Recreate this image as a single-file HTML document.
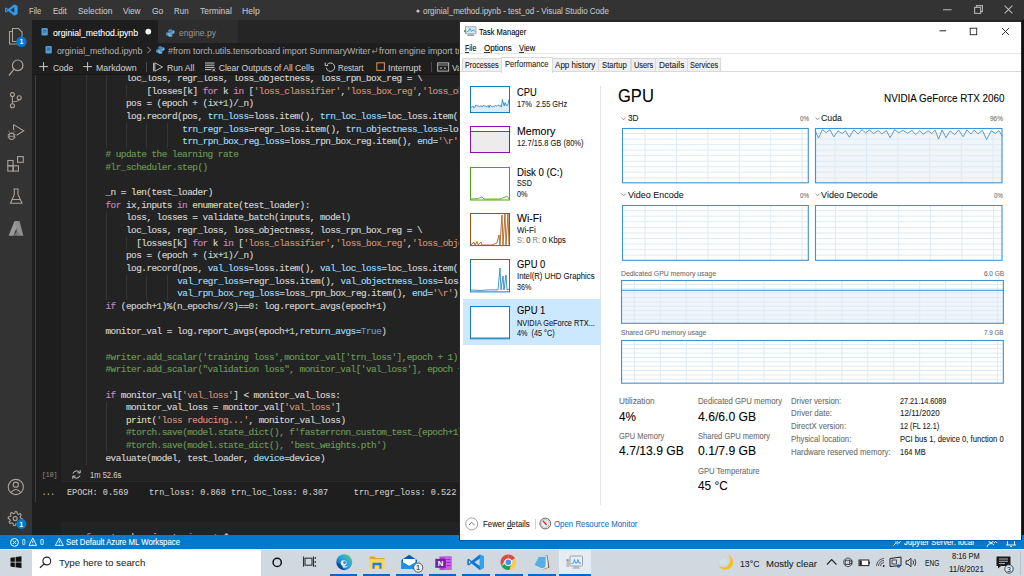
<!DOCTYPE html>
<html><head><meta charset="utf-8"><style>
*{margin:0;padding:0;box-sizing:border-box}
html,body{width:1024px;height:576px;overflow:hidden;background:#1e1e1e;font-family:"Liberation Sans",sans-serif}
.a{position:absolute}
.t{-webkit-text-stroke:0.08px currentColor;position:absolute;white-space:pre;transform-origin:0 0}
.ln{-webkit-text-stroke:0.15px currentColor;position:absolute;white-space:pre;font-family:"Liberation Mono",monospace;font-size:9.4px;letter-spacing:-0.52px;line-height:12.66px;height:12.66px;color:#d4d4d4}
.k{color:#c586c0}.f{color:#dcdcaa}.p{color:#9cdcfe}.s{color:#ce9178}.c{color:#6a9955}.n{color:#b5cea8}.b{color:#569cd6}
svg{position:absolute;overflow:visible}
</style></head><body>
<div class="a" style="left:0px;top:0px;width:1024px;height:20px;background:#333333"></div>
<div class="a" style="left:0px;top:20px;width:32px;height:515px;background:#333333"></div>
<div class="a" style="left:32px;top:20px;width:992px;height:23px;background:#252526"></div>
<div class="a" style="left:32px;top:20px;width:126px;height:23px;background:#1e1e1e"></div>
<div class="a" style="left:158px;top:20px;width:80px;height:23px;background:#2d2d2d"></div>
<div class="a" style="left:32px;top:43px;width:992px;height:492px;background:#1e1e1e"></div>
<svg style="left:5px;top:4px;" width="13" height="12" viewBox="0 0 13 12"><path d="M9.3 0.3 L12.6 1.9 V10.1 L9.3 11.7 L3.2 6.9 L1.2 8.6 L0 8 V4 L1.2 3.4 L3.2 5.1 Z M9.3 3.3 L5.3 6 L9.3 8.7 Z M1.3 4.6 V7.4 L2.6 6 Z" fill="#2f9bf0" fill-rule="evenodd"/></svg>
<div id="t1" class="t" style="left:28.70px;top:6.75px;font-size:8.8px;line-height:8.8px;color:#c3c3c3;transform:scaleX(0.8612);">File</div>
<div id="t2" class="t" style="left:52.60px;top:6.75px;font-size:8.8px;line-height:8.8px;color:#c3c3c3;transform:scaleX(0.8973);">Edit</div>
<div id="t3" class="t" style="left:77.70px;top:6.75px;font-size:8.8px;line-height:8.8px;color:#c3c3c3;transform:scaleX(0.9478);">Selection</div>
<div id="t4" class="t" style="left:122.90px;top:6.75px;font-size:8.8px;line-height:8.8px;color:#c3c3c3;transform:scaleX(0.9256);">View</div>
<div id="t5" class="t" style="left:151.80px;top:6.75px;font-size:8.8px;line-height:8.8px;color:#c3c3c3;transform:scaleX(0.9542);">Go</div>
<div id="t6" class="t" style="left:173.70px;top:6.75px;font-size:8.8px;line-height:8.8px;color:#c3c3c3;transform:scaleX(0.9049);">Run</div>
<div id="t7" class="t" style="left:199.50px;top:6.75px;font-size:8.8px;line-height:8.8px;color:#c3c3c3;transform:scaleX(0.9553);">Terminal</div>
<div id="t8" class="t" style="left:242.20px;top:6.75px;font-size:8.8px;line-height:8.8px;color:#c3c3c3;transform:scaleX(0.9780);">Help</div>
<svg style="left:416px;top:8.5px;" width="4" height="4" viewBox="0 0 4 4"><circle cx="2" cy="2" r="1.6" fill="#c3c3c3"/></svg>
<div id="t9" class="t" style="left:422.60px;top:6.75px;font-size:8.8px;line-height:8.8px;color:#c3c3c3;transform:scaleX(0.9059);">orginial_method.ipynb - test_od - Visual Studio Code</div>
<svg style="left:943px;top:9px;" width="9" height="2" viewBox="0 0 9 2"><rect x="0" y="0.2" width="8.5" height="1.1" fill="#b0b0b0"/></svg>
<svg style="left:974px;top:5px;" width="9" height="9" viewBox="0 0 9 9"><rect x="0.6" y="2.4" width="6" height="6" fill="none" stroke="#b0b0b0" stroke-width="1.1"/><path d="M2.4 2.4 V0.6 H8.4 V6.6 H6.6" fill="none" stroke="#b0b0b0" stroke-width="1.1"/></svg>
<svg style="left:1004px;top:5px;" width="9" height="9" viewBox="0 0 9 9"><path d="M0.6 0.6 L8.4 8.4 M8.4 0.6 L0.6 8.4" stroke="#b8b8b8" stroke-width="1.1"/></svg>
<svg style="left:0px;top:20px;" width="32" height="32" viewBox="0 0 32 32"><path d="M12.5 8.5 h6 l3.5 3.5 v9.5 h-9.5 z M12.5 11.5 h-3 v12.5 h9.5 v-2.5" fill="none" stroke="#a9a29b" stroke-width="1.1"/></svg>
<svg style="left:0px;top:20px;" width="32" height="32" viewBox="0 0 32 32"><circle cx="21.4" cy="21.7" r="5.2" fill="#0078d4"/><text x="21.4" y="24.3" font-size="7" font-family="Liberation Sans" fill="#fff" text-anchor="middle" font-weight="bold">1</text></svg>
<svg style="left:0px;top:52px;" width="32" height="30" viewBox="0 0 32 30"><circle cx="17.7" cy="13.3" r="5.3" fill="none" stroke="#a9a29b" stroke-width="1.2"/><path d="M14 17.2 L9 23.5" stroke="#a9a29b" stroke-width="1.3"/></svg>
<svg style="left:0px;top:85px;" width="32" height="30" viewBox="0 0 32 30"><circle cx="12.4" cy="9.6" r="2" fill="none" stroke="#a9a29b" stroke-width="1.1"/><circle cx="12.4" cy="20.8" r="2" fill="none" stroke="#a9a29b" stroke-width="1.1"/><circle cx="19.2" cy="12.7" r="2" fill="none" stroke="#a9a29b" stroke-width="1.1"/><path d="M12.4 11.6 V18.8 M19.2 14.7 Q19 16.6 12.4 16.8" fill="none" stroke="#a9a29b" stroke-width="1.1"/></svg>
<svg style="left:0px;top:118px;" width="32" height="24" viewBox="0 0 32 24"><path d="M13.6 6.6 L23.7 12.8 L16.6 17.2" fill="none" stroke="#a9a29b" stroke-width="1.1"/><path d="M13.6 6.6 V12" fill="none" stroke="#a9a29b" stroke-width="1.1"/><ellipse cx="11.6" cy="18.3" rx="2.8" ry="3.2" fill="none" stroke="#a9a29b" stroke-width="1.1"/><path d="M7.6 16.8 h1.4 M14.2 16.8 h1.4 M7.6 19.3 h1.4 M14.2 19.3 h1.4 M9.8 14.3 L8.4 13 M13.4 14.3 L14.8 13 M8.8 18.3 h5.6" stroke="#a9a29b" stroke-width="0.9"/></svg>
<svg style="left:0px;top:150px;" width="32" height="26" viewBox="0 0 32 26"><rect x="7.8" y="10.5" width="5.3" height="5.3" fill="none" stroke="#a9a29b" stroke-width="1.1"/><rect x="7.8" y="15.8" width="5.3" height="5.3" fill="none" stroke="#a9a29b" stroke-width="1.1"/><rect x="13.1" y="15.8" width="5.3" height="5.3" fill="none" stroke="#a9a29b" stroke-width="1.1"/><rect x="17.6" y="6.6" width="5.7" height="5.7" fill="none" stroke="#a9a29b" stroke-width="1.1"/></svg>
<svg style="left:0px;top:184px;" width="32" height="24" viewBox="0 0 32 24"><path d="M13.5 5 h5 M14.3 5 v5.5 L10.5 19.3 h11.5 L18 10.5 V5 M12 15.5 h8" fill="none" stroke="#a9a29b" stroke-width="1.1"/></svg>
<svg style="left:0px;top:218px;" width="32" height="22" viewBox="0 0 32 22"><path d="M14.5 3 h5 L23.4 17.8 H17.8 Z" fill="#8f8f8f"/><path d="M14.5 3 L8.6 17.8 H13.5 L16.8 9 Z" fill="#9a9a9a"/><path d="M13.8 17.8 H21 L17 13 Z" fill="#7a7a7a"/></svg>
<svg style="left:0px;top:472px;" width="32" height="32" viewBox="0 0 32 32"><circle cx="15.8" cy="15" r="7.6" fill="none" stroke="#a9a29b" stroke-width="1.1"/><circle cx="15.8" cy="12.7" r="2.6" fill="none" stroke="#a9a29b" stroke-width="1.1"/><path d="M10.8 20.5 Q15.8 14.5 20.8 20.5" fill="none" stroke="#a9a29b" stroke-width="1.1"/></svg>
<svg style="left:0px;top:502px;" width="32" height="32" viewBox="0 0 32 32"><polygon points="22.20,16.60 22.14,17.51 21.96,18.41 20.10,18.63 19.79,19.25 19.40,19.83 20.15,21.55 19.46,22.15 18.70,22.66 17.23,21.50 16.57,21.72 15.89,21.85 15.20,23.60 14.29,23.54 13.39,23.36 13.17,21.50 12.55,21.19 11.97,20.80 10.25,21.55 9.65,20.86 9.14,20.10 10.30,18.63 10.08,17.97 9.95,17.29 8.20,16.60 8.26,15.69 8.44,14.79 10.30,14.57 10.61,13.95 11.00,13.37 10.25,11.65 10.94,11.05 11.70,10.54 13.17,11.70 13.83,11.48 14.51,11.35 15.20,9.60 16.11,9.66 17.01,9.84 17.23,11.70 17.85,12.01 18.43,12.40 20.15,11.65 20.75,12.34 21.26,13.10 20.10,14.57 20.32,15.23 20.45,15.91" fill="none" stroke="#a9a29b" stroke-width="1.1"/><circle cx="15.2" cy="16.6" r="2" fill="none" stroke="#a9a29b" stroke-width="1.1"/></svg>
<svg style="left:0px;top:502px;" width="32" height="32" viewBox="0 0 32 32"><circle cx="21.3" cy="22.1" r="5" fill="#0078d4"/><text x="21.3" y="24.6" font-size="7" font-family="Liberation Sans" fill="#fff" text-anchor="middle" font-weight="bold">1</text></svg>
<svg style="left:41px;top:28px;" width="8" height="8" viewBox="0 0 8 8"><rect x="0.5" y="0" width="6.3" height="7.4" rx="1.2" fill="#4f9cd6"/><path d="M2 2.2 h3.4 M2 4 h3.4" stroke="#1e3d5a" stroke-width="0.6"/></svg>
<div id="t10" class="t" style="left:53.30px;top:28.72px;font-size:8.6px;line-height:8.6px;color:#ffffff;transform:scaleX(1.0106);">orginial_method.ipynb</div>
<svg style="left:144px;top:28px;" width="8" height="8" viewBox="0 0 8 8"><circle cx="4.3" cy="3.6" r="2.9" fill="#f0f0f0"/></svg>
<svg style="left:166px;top:29px;" width="9" height="8" viewBox="0 0 9 8"><path d="M4.2 0.2 C2.4 0.2 2.2 1 2.2 1.8 V2.8 H4.5 V3.3 H1.3 C0.3 3.3 0 4.2 0 5 C0 6 0.4 6.8 1.3 6.8 H2 V5.6 C2 4.8 2.6 4.2 3.4 4.2 H5.6 C6.2 4.2 6.6 3.8 6.6 3.2 V1.8 C6.6 1 5.9 0.2 4.2 0.2 Z" fill="#4b8bbe"/><path d="M4.4 7.8 C6.2 7.8 6.4 7 6.4 6.2 V5.2 H4.1 V4.7 H7.3 C8.3 4.7 8.6 3.8 8.6 3 C8.6 2 8.2 1.2 7.3 1.2 H6.6 V2.4 C6.6 3.2 6 3.8 5.2 3.8 H3 C2.4 3.8 2 4.2 2 4.8 V6.2 C2 7 2.7 7.8 4.4 7.8 Z" fill="#6fb1e0"/></svg>
<div id="t11" class="t" style="left:179.30px;top:28.72px;font-size:8.6px;line-height:8.6px;color:#8f8f8f;transform:scaleX(0.9902);">engine.py</div>
<svg style="left:45px;top:46px;" width="8" height="8" viewBox="0 0 8 8"><rect x="0.5" y="0" width="6.3" height="7.4" rx="1.2" fill="#4f9cd6"/><path d="M2 2.2 h3.4 M2 4 h3.4" stroke="#1e3d5a" stroke-width="0.6"/></svg>
<div id="t12" class="t" style="left:57.10px;top:47.12px;font-size:8.6px;line-height:8.6px;color:#a9a9a9;transform:scaleX(1.0142);">orginial_method.ipynb</div>
<svg style="left:146px;top:46px;" width="6" height="8" viewBox="0 0 6 8"><path d="M1.5 0.8 L4.6 4 L1.5 7.2" fill="none" stroke="#a0a0a0" stroke-width="0.9"/></svg>
<svg style="left:156px;top:46px;" width="9" height="8" viewBox="0 0 9 8"><path d="M4.2 0.2 C2.4 0.2 2.2 1 2.2 1.8 V2.8 H4.5 V3.3 H1.3 C0.3 3.3 0 4.2 0 5 C0 6 0.4 6.8 1.3 6.8 H2 V5.6 C2 4.8 2.6 4.2 3.4 4.2 H5.6 C6.2 4.2 6.6 3.8 6.6 3.2 V1.8 C6.6 1 5.9 0.2 4.2 0.2 Z" fill="#4b8bbe"/><path d="M4.4 7.8 C6.2 7.8 6.4 7 6.4 6.2 V5.2 H4.1 V4.7 H7.3 C8.3 4.7 8.6 3.8 8.6 3 C8.6 2 8.2 1.2 7.3 1.2 H6.6 V2.4 C6.6 3.2 6 3.8 5.2 3.8 H3 C2.4 3.8 2 4.2 2 4.8 V6.2 C2 7 2.7 7.8 4.4 7.8 Z" fill="#6fb1e0"/></svg>
<div id="t13" class="t" style="left:168.00px;top:47.12px;font-size:8.6px;line-height:8.6px;color:#a9a9a9;transform:scaleX(1.0243);">#from torch.utils.tensorboard import SummaryWriter</div>
<svg style="left:370.5px;top:47px;" width="7" height="7" viewBox="0 0 7 7"><path d="M5.8 0.8 V4.6 H1.2 M2.8 3 L1 4.6 L2.8 6.2" fill="none" stroke="#a0a0a0" stroke-width="0.8"/></svg>
<div id="t14" class="t" style="left:378.50px;top:47.12px;font-size:8.6px;line-height:8.6px;color:#a9a9a9;transform:scaleX(1.0262);">from engine import tr</div>
<svg style="left:39px;top:62px;" width="10" height="10" viewBox="0 0 10 10"><path d="M4.6 0.2 V9 M0.2 4.6 H9" stroke="#c8c8c8" stroke-width="1"/></svg>
<div id="t15" class="t" style="left:52.90px;top:63.52px;font-size:8.6px;line-height:8.6px;color:#c8c8c8;transform:scaleX(0.9824);">Code</div>
<svg style="left:83px;top:62px;" width="10" height="10" viewBox="0 0 10 10"><path d="M4.6 0.2 V9 M0.2 4.6 H9" stroke="#c8c8c8" stroke-width="1"/></svg>
<div id="t16" class="t" style="left:96.40px;top:63.52px;font-size:8.6px;line-height:8.6px;color:#c8c8c8;transform:scaleX(1.0235);">Markdown</div>
<div class="a" style="left:146px;top:62px;width:1px;height:10px;background:#4a4a4a"></div>
<svg style="left:153px;top:62px;" width="11" height="10" viewBox="0 0 11 10"><path d="M1.8 0.8 L9.5 5 L1.8 9.2 Z M0.5 0.8 V9.2" fill="none" stroke="#c8c8c8" stroke-width="0.9"/></svg>
<div id="t17" class="t" style="left:167.00px;top:63.52px;font-size:8.6px;line-height:8.6px;color:#c8c8c8;transform:scaleX(1.0074);">Run All</div>
<svg style="left:204px;top:62px;" width="13" height="10" viewBox="0 0 13 10"><path d="M1 1 h9.5 M1 3.2 h9.5 M1 5.4 h9.5 M1 7.6 h6.5 M8.3 6.6 l2.8 2.8 M11.1 6.6 l-2.8 2.8" fill="none" stroke="#c8c8c8" stroke-width="1"/></svg>
<div id="t18" class="t" style="left:218.70px;top:63.52px;font-size:8.6px;line-height:8.6px;color:#c8c8c8;">Clear Outputs of All Cells</div>
<svg style="left:324px;top:61px;" width="12" height="12" viewBox="0 0 12 12"><path d="M3.2 3.5 A4.2 4.2 0 1 1 2.3 6.8" fill="none" stroke="#c8c8c8" stroke-width="1"/><path d="M1.2 1.6 V4.6 H4.2" fill="none" stroke="#c8c8c8" stroke-width="1"/></svg>
<div id="t19" class="t" style="left:338.00px;top:63.52px;font-size:8.6px;line-height:8.6px;color:#c8c8c8;transform:scaleX(0.9148);">Restart</div>
<svg style="left:376px;top:62px;" width="10" height="10" viewBox="0 0 10 10"><rect x="0.8" y="0.8" width="7.6" height="7.6" fill="none" stroke="#d18a4d" stroke-width="1.1"/></svg>
<div id="t20" class="t" style="left:388.40px;top:63.52px;font-size:8.6px;line-height:8.6px;color:#c8c8c8;transform:scaleX(1.0271);">Interrupt</div>
<div class="a" style="left:431px;top:62px;width:1px;height:10px;background:#4a4a4a"></div>
<svg style="left:437px;top:62px;" width="13" height="10" viewBox="0 0 13 10"><rect x="0.7" y="0.9" width="11" height="8.2" fill="none" stroke="#c8c8c8" stroke-width="0.9"/><path d="M0.7 3 H11.7 M3 5.2 L5 7.3 M5 5.2 L3 7.3 M7 5.2 L9 7.3 M9 5.2 L7 7.3" fill="none" stroke="#c8c8c8" stroke-width="0.7"/></svg>
<div id="t21" class="t" style="left:452.00px;top:63.52px;font-size:8.6px;line-height:8.6px;color:#c8c8c8;transform:scaleX(0.9744);">Variables</div>
<div class="a" style="left:32px;top:74px;width:992px;height:1px;background:#161616"></div>
<div class="a" style="left:32px;top:75px;width:992px;height:460px;background:#1e1e1e"></div>
<div class="a" style="left:61px;top:75px;width:420px;height:407px;background:#232323"></div>
<div class="a" style="left:35px;top:75px;width:1px;height:427px;background:#3c3c4a"></div>
<div class="a" style="left:60px;top:75px;width:1px;height:407px;background:#1a1a1a"></div>
<div class="a" style="left:0;top:75px;width:460px;height:407px;overflow:hidden">
<div class="a" style="left:86px;top:-2.50px;width:1px;height:12.66px;background:#353535"></div>
<div class="a" style="left:106px;top:-2.50px;width:1px;height:12.66px;background:#353535"></div>
<div class="ln" style="left:125.98px;top:-2.00px">loc_loss, regr_loss, loss_objectness, loss_rpn_box_reg = \</div>
<div class="a" style="left:86px;top:10.16px;width:1px;height:12.66px;background:#353535"></div>
<div class="a" style="left:106px;top:10.16px;width:1px;height:12.66px;background:#353535"></div>
<div class="a" style="left:126px;top:10.16px;width:1px;height:12.66px;background:#353535"></div>
<div class="ln" style="left:146.46px;top:10.66px">[losses[k] <span class="k">for</span> k <span class="k">in</span> [<span class="s">'loss_classifier'</span>,<span class="s">'loss_box_reg'</span>,<span class="s">'loss_objectness'</span>,<span class="s">'loss_rpn_box_reg'</span>]]</div>
<div class="a" style="left:86px;top:22.82px;width:1px;height:12.66px;background:#353535"></div>
<div class="a" style="left:106px;top:22.82px;width:1px;height:12.66px;background:#353535"></div>
<div class="ln" style="left:125.98px;top:23.32px">pos = (epoch + (ix+<span class="n">1</span>)/_n)</div>
<div class="a" style="left:86px;top:35.48px;width:1px;height:12.66px;background:#353535"></div>
<div class="a" style="left:106px;top:35.48px;width:1px;height:12.66px;background:#353535"></div>
<div class="ln" style="left:125.98px;top:35.98px">log.record(pos, <span class="p">trn_loss</span>=loss.item(), <span class="p">trn_loc_loss</span>=loc_loss.item(),</div>
<div class="a" style="left:86px;top:48.14px;width:1px;height:12.66px;background:#353535"></div>
<div class="a" style="left:106px;top:48.14px;width:1px;height:12.66px;background:#353535"></div>
<div class="a" style="left:126px;top:48.14px;width:1px;height:12.66px;background:#353535"></div>
<div class="a" style="left:146px;top:48.14px;width:1px;height:12.66px;background:#353535"></div>
<div class="a" style="left:167px;top:48.14px;width:1px;height:12.66px;background:#353535"></div>
<div class="ln" style="left:182.30px;top:48.64px"><span class="p">trn_regr_loss</span>=regr_loss.item(), <span class="p">trn_objectness_loss</span>=loss_objectness.item(),</div>
<div class="a" style="left:86px;top:60.80px;width:1px;height:12.66px;background:#353535"></div>
<div class="a" style="left:106px;top:60.80px;width:1px;height:12.66px;background:#353535"></div>
<div class="a" style="left:126px;top:60.80px;width:1px;height:12.66px;background:#353535"></div>
<div class="a" style="left:146px;top:60.80px;width:1px;height:12.66px;background:#353535"></div>
<div class="a" style="left:167px;top:60.80px;width:1px;height:12.66px;background:#353535"></div>
<div class="ln" style="left:182.30px;top:61.30px"><span class="p">trn_rpn_box_reg_loss</span>=loss_rpn_box_reg.item(), <span class="p">end</span>=<span class="s">'\r'</span>)</div>
<div class="a" style="left:86px;top:73.46px;width:1px;height:12.66px;background:#353535"></div>
<div class="ln" style="left:105.50px;top:73.96px"><span class="c"># update the learning rate</span></div>
<div class="a" style="left:86px;top:86.12px;width:1px;height:12.66px;background:#353535"></div>
<div class="ln" style="left:105.50px;top:86.62px"><span class="c">#lr_scheduler.step()</span></div>
<div class="a" style="left:86px;top:98.78px;width:1px;height:12.66px;background:#353535"></div>
<div class="ln" style="left:105.50px;top:99.28px"></div>
<div class="a" style="left:86px;top:111.44px;width:1px;height:12.66px;background:#353535"></div>
<div class="ln" style="left:105.50px;top:111.94px">_n = <span class="f">len</span>(test_loader)</div>
<div class="a" style="left:86px;top:124.10px;width:1px;height:12.66px;background:#353535"></div>
<div class="ln" style="left:105.50px;top:124.60px"><span class="k">for</span> ix,inputs <span class="k">in</span> <span class="f">enumerate</span>(test_loader):</div>
<div class="a" style="left:86px;top:136.76px;width:1px;height:12.66px;background:#353535"></div>
<div class="a" style="left:106px;top:136.76px;width:1px;height:12.66px;background:#353535"></div>
<div class="ln" style="left:125.98px;top:137.26px">loss, losses = validate_batch(inputs, model)</div>
<div class="a" style="left:86px;top:149.42px;width:1px;height:12.66px;background:#353535"></div>
<div class="a" style="left:106px;top:149.42px;width:1px;height:12.66px;background:#353535"></div>
<div class="ln" style="left:125.98px;top:149.92px">loc_loss, regr_loss, loss_objectness, loss_rpn_box_reg = \</div>
<div class="a" style="left:86px;top:162.08px;width:1px;height:12.66px;background:#353535"></div>
<div class="a" style="left:106px;top:162.08px;width:1px;height:12.66px;background:#353535"></div>
<div class="a" style="left:126px;top:162.08px;width:1px;height:12.66px;background:#353535"></div>
<div class="ln" style="left:136.22px;top:162.58px">[losses[k] <span class="k">for</span> k <span class="k">in</span> [<span class="s">'loss_classifier'</span>,<span class="s">'loss_box_reg'</span>,<span class="s">'loss_objectness'</span>,<span class="s">'loss_rpn_box_reg'</span>]]</div>
<div class="a" style="left:86px;top:174.74px;width:1px;height:12.66px;background:#353535"></div>
<div class="a" style="left:106px;top:174.74px;width:1px;height:12.66px;background:#353535"></div>
<div class="ln" style="left:125.98px;top:175.24px">pos = (epoch + (ix+<span class="n">1</span>)/_n)</div>
<div class="a" style="left:86px;top:187.40px;width:1px;height:12.66px;background:#353535"></div>
<div class="a" style="left:106px;top:187.40px;width:1px;height:12.66px;background:#353535"></div>
<div class="ln" style="left:125.98px;top:187.90px">log.record(pos, <span class="p">val_loss</span>=loss.item(), <span class="p">val_loc_loss</span>=loc_loss.item(),</div>
<div class="a" style="left:86px;top:200.06px;width:1px;height:12.66px;background:#353535"></div>
<div class="a" style="left:106px;top:200.06px;width:1px;height:12.66px;background:#353535"></div>
<div class="a" style="left:126px;top:200.06px;width:1px;height:12.66px;background:#353535"></div>
<div class="a" style="left:146px;top:200.06px;width:1px;height:12.66px;background:#353535"></div>
<div class="a" style="left:167px;top:200.06px;width:1px;height:12.66px;background:#353535"></div>
<div class="ln" style="left:177.18px;top:200.56px"><span class="p">val_regr_loss</span>=regr_loss.item(), <span class="p">val_objectness_loss</span>=loss_objectness.item(),</div>
<div class="a" style="left:86px;top:212.72px;width:1px;height:12.66px;background:#353535"></div>
<div class="a" style="left:106px;top:212.72px;width:1px;height:12.66px;background:#353535"></div>
<div class="a" style="left:126px;top:212.72px;width:1px;height:12.66px;background:#353535"></div>
<div class="a" style="left:146px;top:212.72px;width:1px;height:12.66px;background:#353535"></div>
<div class="a" style="left:167px;top:212.72px;width:1px;height:12.66px;background:#353535"></div>
<div class="ln" style="left:177.18px;top:213.22px"><span class="p">val_rpn_box_reg_loss</span>=loss_rpn_box_reg.item(), <span class="p">end</span>=<span class="s">'\r'</span>)</div>
<div class="a" style="left:86px;top:225.38px;width:1px;height:12.66px;background:#353535"></div>
<div class="ln" style="left:105.50px;top:225.88px"><span class="k">if</span> (epoch+<span class="n">1</span>)%(n_epochs//<span class="n">3</span>)==<span class="n">0</span>: log.report_avgs(epoch+<span class="n">1</span>)</div>
<div class="a" style="left:86px;top:238.04px;width:1px;height:12.66px;background:#353535"></div>
<div class="ln" style="left:105.50px;top:238.54px"></div>
<div class="a" style="left:86px;top:250.70px;width:1px;height:12.66px;background:#353535"></div>
<div class="ln" style="left:105.50px;top:251.20px">monitor_val = log.report_avgs(epoch+<span class="n">1</span>,<span class="p">return_avgs</span>=<span class="b">True</span>)</div>
<div class="a" style="left:86px;top:263.36px;width:1px;height:12.66px;background:#353535"></div>
<div class="ln" style="left:105.50px;top:263.86px"></div>
<div class="a" style="left:86px;top:276.02px;width:1px;height:12.66px;background:#353535"></div>
<div class="ln" style="left:105.50px;top:276.52px"><span class="c">#writer.add_scalar('training loss',monitor_val['trn_loss'],epoch + 1)</span></div>
<div class="a" style="left:86px;top:288.68px;width:1px;height:12.66px;background:#353535"></div>
<div class="ln" style="left:105.50px;top:289.18px"><span class="c">#writer.add_scalar("validation loss", monitor_val['val_loss'], epoch + 1)</span></div>
<div class="a" style="left:86px;top:301.34px;width:1px;height:12.66px;background:#353535"></div>
<div class="ln" style="left:105.50px;top:301.84px"></div>
<div class="a" style="left:86px;top:314.00px;width:1px;height:12.66px;background:#353535"></div>
<div class="ln" style="left:105.50px;top:314.50px"><span class="k">if</span> monitor_val[<span class="s">'val_loss'</span>] &lt; monitor_val_loss:</div>
<div class="a" style="left:86px;top:326.66px;width:1px;height:12.66px;background:#353535"></div>
<div class="a" style="left:106px;top:326.66px;width:1px;height:12.66px;background:#353535"></div>
<div class="ln" style="left:125.98px;top:327.16px">monitor_val_loss = monitor_val[<span class="s">'val_loss'</span>]</div>
<div class="a" style="left:86px;top:339.32px;width:1px;height:12.66px;background:#353535"></div>
<div class="a" style="left:106px;top:339.32px;width:1px;height:12.66px;background:#353535"></div>
<div class="ln" style="left:125.98px;top:339.82px"><span class="f">print</span>(<span class="s">'loss reducing...'</span>, monitor_val_loss)</div>
<div class="a" style="left:86px;top:351.98px;width:1px;height:12.66px;background:#353535"></div>
<div class="a" style="left:106px;top:351.98px;width:1px;height:12.66px;background:#353535"></div>
<div class="ln" style="left:125.98px;top:352.48px"><span class="c">#torch.save(model.state_dict(), f'fasterrcnn_custom_test_{epoch+1}.pth')</span></div>
<div class="a" style="left:86px;top:364.64px;width:1px;height:12.66px;background:#353535"></div>
<div class="a" style="left:106px;top:364.64px;width:1px;height:12.66px;background:#353535"></div>
<div class="ln" style="left:125.98px;top:365.14px"><span class="c">#torch.save(model.state_dict(), 'best_weights.pth')</span></div>
<div class="a" style="left:86px;top:377.30px;width:1px;height:12.66px;background:#353535"></div>
<div class="ln" style="left:105.50px;top:377.80px">evaluate(model, test_loader, <span class="p">device</span>=device)</div>
</div>
<div id="t22" class="t" style="left:41.76px;top:471.77px;font-size:7.6px;line-height:7.6px;color:#8a8a8a;font-family:'Liberation Mono',monospace;transform:scaleX(0.8398);">[10]</div>
<svg style="left:71px;top:469px;" width="11" height="11" viewBox="0 0 11 11"><path d="M2 4.5 A3.8 3.8 0 0 1 8.8 3.6 M9 6.5 A3.8 3.8 0 0 1 2.2 7.4" fill="none" stroke="#c8c8c8" stroke-width="1"/><path d="M9.2 1.2 V3.9 H6.5 M1.8 9.8 V7.1 H4.5" fill="none" stroke="#c8c8c8" stroke-width="1"/></svg>
<div id="t23" class="t" style="left:89.60px;top:471.09px;font-size:8.4px;line-height:8.4px;color:#c8c8c8;transform:scaleX(0.9048);">1m 52.6s</div>
<div class="a" style="left:61px;top:481px;width:420px;height:1px;background:#2a2a2a"></div>
<div id="t24" class="t" style="left:42.41px;top:489.45px;font-size:8.8px;line-height:8.8px;color:#c8c8c8;font-family:'Liberation Mono',monospace;transform:scaleX(0.7963);">...</div>
<div id="t25" class="t" style="left:66.50px;top:489.45px;font-size:8.8px;line-height:8.8px;color:#cccccc;font-family:'Liberation Mono',monospace;transform:scaleX(0.9703);">EPOCH: 0.569    trn_loss: 0.868 trn_loc_loss: 0.307     trn_regr_loss: 0.522</div>
<div class="a" style="left:61px;top:522px;width:420px;height:13px;background:#232323"></div>
<div class="ln" style="left:85.5px;top:532.4px"><span class="k">from</span> torch_snippets <span class="k">import</span> *</div>
<div class="a" style="left:0px;top:535px;width:1024px;height:14px;background:#007acc"></div>
<svg style="left:9px;top:537px;" width="11" height="11" viewBox="0 0 11 11"><circle cx="5.5" cy="5.4" r="3.9" fill="none" stroke="#ffffff" stroke-width="1"/><path d="M3.8 3.7 L7.2 7.1 M7.2 3.7 L3.8 7.1" stroke="#ffffff" stroke-width="0.9"/></svg>
<div id="t26" class="t" style="left:21.90px;top:538.29px;font-size:8.4px;line-height:8.4px;color:#ffffff;transform:scaleX(0.7000);">0</div>
<svg style="left:28px;top:537px;" width="10" height="10" viewBox="0 0 10 10"><path d="M4.8 1 L8.6 8.4 H1 Z" fill="none" stroke="#ffffff" stroke-width="0.9"/><path d="M4.8 3.6 V6 M4.8 6.8 V7.5" stroke="#ffffff" stroke-width="0.9"/></svg>
<div id="t27" class="t" style="left:39.90px;top:538.29px;font-size:8.4px;line-height:8.4px;color:#ffffff;transform:scaleX(0.8200);">0</div>
<svg style="left:54px;top:537px;" width="11" height="10" viewBox="0 0 11 10"><path d="M5.3 1 L9.3 8.4 H1.3 Z" fill="none" stroke="#ffffff" stroke-width="0.9"/><path d="M5.3 3.6 V6 M5.3 6.8 V7.5" stroke="#ffffff" stroke-width="0.9"/></svg>
<div id="t28" class="t" style="left:65.90px;top:538.29px;font-size:8.4px;line-height:8.4px;color:#ffffff;transform:scaleX(0.9274);">Set Default Azure ML Workspace</div>
<svg style="left:892px;top:537px;" width="10" height="10" viewBox="0 0 10 10"><path d="M1.5 8.5 L4 6 M3.2 4.6 L6 7.4 M4.2 3.5 Q6.8 1 8.5 2.3 Q9.4 4 6.9 6.3 Z" fill="none" stroke="#ffffff" stroke-width="0.9"/></svg>
<div id="t29" class="t" style="left:903.90px;top:538.29px;font-size:8.4px;line-height:8.4px;color:#ffffff;transform:scaleX(0.9153);">Jupyter Server: local</div>
<svg style="left:986px;top:537px;" width="12" height="11" viewBox="0 0 12 11"><circle cx="5" cy="3.5" r="2.2" fill="none" stroke="#ffffff" stroke-width="0.9"/><path d="M1 10 Q1.5 6.5 5 6.5 Q7 6.5 8 8 M8 3 L11 6 M11 3 L8 6" fill="none" stroke="#ffffff" stroke-width="0.9"/></svg>
<svg style="left:1005px;top:537px;" width="12" height="11" viewBox="0 0 12 11"><path d="M2.5 8 V2.5 Q2.5 1 4 1 H8 Q9.5 1 9.5 2.5 V8 M1 8 H11 M5 9.5 H7" fill="none" stroke="#ffffff" stroke-width="0.9"/></svg>
<div class="a" style="left:0px;top:549px;width:1024px;height:27px;background:#d0d9e0"></div>
<div class="a" style="left:0px;top:549px;width:1024px;height:1px;background:#e4e8ec"></div>
<div class="a" style="left:32px;top:550px;width:229px;height:26px;background:#ffffff"></div>
<div class="a" style="left:1020px;top:551px;width:1px;height:24px;background:#b9c0c7"></div>
<svg style="left:9px;top:556px;" width="14" height="13" viewBox="0 0 14 13"><path d="M1.5 1.8 L5.8 1.2 V5.8 H1.5 Z M6.6 1.1 L12.5 0.3 V5.8 H6.6 Z M1.5 6.6 H5.8 V11.2 L1.5 10.6 Z M6.6 6.6 H12.5 V12.1 L6.6 11.3 Z" fill="#111"/></svg>
<svg style="left:38px;top:555px;" width="14" height="14" viewBox="0 0 14 14"><circle cx="8.8" cy="6" r="3.9" fill="none" stroke="#222" stroke-width="1.1"/><path d="M6 8.9 L2 12.8" stroke="#222" stroke-width="1.2"/></svg>
<div id="t30" class="t" style="left:59.40px;top:558.34px;font-size:9.4px;line-height:9.4px;color:#2e2e2e;transform:scaleX(1.0430);">Type here to search</div>
<svg style="left:270px;top:555px;" width="15" height="15" viewBox="0 0 15 15"><circle cx="7.2" cy="7.4" r="4.1" fill="none" stroke="#111" stroke-width="1.5"/></svg>
<svg style="left:302px;top:555px;" width="15" height="14" viewBox="0 0 15 14"><rect x="3" y="3.2" width="7" height="7" fill="none" stroke="#333" stroke-width="1.1"/><path d="M1.5 1.5 V11.8 M11.5 1.5 V11.8 M13.3 2 V4 M13.3 6 V8 M13.3 10 V12" stroke="#333" stroke-width="1.1"/></svg>
<div class="a" style="left:330px;top:573.5px;width:27px;height:2.5px;background:#0f66c4"></div>
<div class="a" style="left:363px;top:573.5px;width:27px;height:2.5px;background:#0f66c4"></div>
<div class="a" style="left:396px;top:573.5px;width:27px;height:2.5px;background:#0f66c4"></div>
<div class="a" style="left:429px;top:573.5px;width:27px;height:2.5px;background:#0f66c4"></div>
<div class="a" style="left:462px;top:573.5px;width:27.5px;height:2.5px;background:#0f66c4"></div>
<div class="a" style="left:495px;top:573.5px;width:27.5px;height:2.5px;background:#0f66c4"></div>
<div class="a" style="left:528px;top:573.5px;width:27.600000000000023px;height:2.5px;background:#0f66c4"></div>
<div class="a" style="left:559px;top:549px;width:32px;height:27px;background:#e6ecf1"></div>
<div class="a" style="left:559px;top:573.5px;width:32px;height:2.5px;background:#0f66c4"></div>
<svg style="left:335.5px;top:554px;" width="17" height="17" viewBox="0 0 17 17"><defs><linearGradient id="eg" x1="1" y1="0" x2="0" y2="1"><stop offset="0" stop-color="#5fd36c"/><stop offset="0.45" stop-color="#2b9fe3"/><stop offset="1" stop-color="#0b4f9e"/></linearGradient></defs><circle cx="8.2" cy="8.2" r="8" fill="url(#eg)"/><path d="M1 9.5 Q2.5 15.5 9 16 Q4.5 13 5.5 9.5 Z" fill="#0a4a96"/><ellipse cx="7.6" cy="9" rx="3" ry="2.8" fill="#e4f3fb"/><ellipse cx="8.6" cy="8.6" rx="1.6" ry="1.4" fill="#2a8fd8"/><path d="M6.2 11 Q9 13.2 12.5 11.2 Q10.5 14.5 7 13.5 Z" fill="#e4f3fb" opacity="0.9"/></svg>
<svg style="left:368.5px;top:555px;" width="17" height="15" viewBox="0 0 17 15"><path d="M0.5 1.5 H5.5 L7 3 H15.5 V5.5 H0.5 Z" fill="#e5a52a"/><rect x="0.5" y="4" width="15" height="9.8" fill="#ffd45e"/><path d="M3.5 7.8 H12.5 V13.8 H10.4 V10.2 H5.6 V13.8 H3.5 Z" fill="#1d7fd6"/></svg>
<svg style="left:401px;top:554px;" width="24" height="19" viewBox="0 0 24 19"><path d="M0.5 6 L8.2 0.8 L16 6 V15 H0.5 Z" fill="#0b5cb0"/><path d="M2 5 H14.5 V8.5 L8.2 12 L2 8.5 Z" fill="#ffffff"/><path d="M0.5 7.2 L8.2 12.2 L16 7.2 V15 H0.5 Z" fill="#1f92e6"/><circle cx="17.2" cy="13.6" r="4.6" fill="#eef1f3" stroke="#4a4a4a" stroke-width="0.9"/><text x="17.2" y="16.4" font-size="7.5" font-family="Liberation Sans" text-anchor="middle" fill="#111">1</text></svg>
<svg style="left:434.5px;top:555.5px;" width="18" height="15" viewBox="0 0 18 15"><rect x="4.5" y="0.5" width="12" height="13.5" fill="#b545d6"/><rect x="9.5" y="0.5" width="7" height="13.5" fill="#c661e6"/><path d="M11.5 3.5 h4 M11.5 6.5 h4 M11.5 9.5 h4" stroke="#9a2dc0" stroke-width="1"/><rect x="0.3" y="2.8" width="10.5" height="9" fill="#7a1fa5"/><text x="5.6" y="10.4" font-size="7.8" font-family="Liberation Sans" font-weight="bold" text-anchor="middle" fill="#fff">N</text></svg>
<svg style="left:467.3px;top:554.3px;" width="18" height="17" viewBox="0 0 18 17"><path d="M12.8 0.4 L17 2.5 V13.8 L12.8 15.9 L4.6 9.4 L1.8 11.6 L0.3 10.9 V5.4 L1.8 4.7 L4.6 6.9 Z M12.8 4.4 L7.4 8.15 L12.8 11.9 Z M1.9 6.3 V10 L3.8 8.15 Z" fill="#1276d0" fill-rule="evenodd"/><path d="M12.8 0.4 L17 2.5 V13.8 L12.8 15.9 Z" fill="#2fa3f2"/></svg>
<svg style="left:500.3px;top:554px;" width="17" height="17" viewBox="0 0 17 17"><path d="M8.3 8.2 L8.3 0.4 A7.8 7.8 0 0 1 15.05 4.3 Z" fill="#e04a3a"/><path d="M8.3 0.4 A7.8 7.8 0 0 0 1.55 12.1 L4.7 6.2 L8.3 4.5 Z" fill="#e04a3a"/><path d="M1.55 12.1 A7.8 7.8 0 0 0 9.5 15.9 L11.6 10 L5 10 Z" fill="#1ea05a"/><path d="M15.05 4.3 A7.8 7.8 0 0 1 9.5 15.9 L12.2 8.2 Z" fill="#ffcd3a"/><circle cx="8.3" cy="8.2" r="3.7" fill="#ffffff"/><circle cx="8.3" cy="8.2" r="2.8" fill="#4a8fe8"/></svg>
<svg style="left:533.5px;top:555px;" width="17" height="15" viewBox="0 0 17 15"><path d="M5 1.5 L13.5 0.5 L15.5 12.5 L9 14.5 Z" fill="#8a6a50"/><path d="M1 10.5 L5.5 1.8 L13 1.2 L14 12.3 L8.5 14.3 Z" fill="#f4f8fb"/><path d="M0.5 10 L5 1.5 L12.2 1.5 L11.8 12 L7.8 13.5 Z" fill="#5aaee6"/><path d="M5 1.5 L12.2 1.5 L11.8 12" fill="none" stroke="#c9e4f6" stroke-width="0.8"/></svg>
<svg style="left:566px;top:555px;" width="18" height="16" viewBox="0 0 18 16"><rect x="4" y="1" width="12.5" height="10" rx="0.8" fill="#e8ecef" stroke="#9ea4a9" stroke-width="1"/><rect x="5.3" y="2.3" width="10" height="7.4" fill="#dff0fb"/><path d="M5.5 8.5 L7.5 8 L8.5 4.5 L9.5 8 L11 8 L12 4.5 L13 8 L15 8" fill="none" stroke="#3d90d8" stroke-width="0.9"/><path d="M8 11.3 H12.5 L14 13.8 H6.5 Z" fill="#b3b8bc"/><rect x="0.5" y="4" width="3" height="8" fill="#b9bec2"/><rect x="0.8" y="4.5" width="1.5" height="1.5" fill="#53b048"/></svg>
<svg style="left:717px;top:554px;" width="18" height="17" viewBox="0 0 18 17"><path d="M11 1 A7.6 7.6 0 1 1 1.6 11.5 A6.6 6.6 0 0 0 11 1 Z" fill="#f6be16"/><path d="M3 9 Q2 6.5 4.5 6 Q5 3.5 7.5 4.5 Q9.5 5 9 7.5 Q10.5 8.5 9 10 H4 Q2.5 10 3 9 Z" fill="#cfe1f1" opacity="0.9"/></svg>
<div id="t31" class="t" style="left:740.00px;top:559.14px;font-size:9.4px;line-height:9.4px;color:#1e1e1e;transform:scaleX(0.9303);">13°C</div>
<div id="t32" class="t" style="left:765.50px;top:559.14px;font-size:9.4px;line-height:9.4px;color:#1e1e1e;transform:scaleX(1.0183);">Mostly clear</div>
<svg style="left:826px;top:558px;" width="12" height="8" viewBox="0 0 12 8"><path d="M1 6.5 L5.7 1.5 L10.4 6.5" fill="none" stroke="#222" stroke-width="1.1"/></svg>
<svg style="left:843px;top:556px;" width="11" height="13" viewBox="0 0 11 13"><circle cx="5" cy="6.3" r="4.3" fill="none" stroke="#333" stroke-width="0.8"/><rect x="2.2" y="4.2" width="4.5" height="4.2" fill="none" stroke="#333" stroke-width="0.9"/><path d="M6.8 5.3 L8.6 4.3 V8.4 L6.8 7.3" fill="none" stroke="#333" stroke-width="0.8"/></svg>
<svg style="left:858px;top:559px;" width="13" height="8" viewBox="0 0 13 8"><rect x="1" y="1" width="9.8" height="5.6" fill="#fff" stroke="#222" stroke-width="1"/><rect x="1.5" y="1.5" width="2.3" height="4.6" fill="#222"/><rect x="10.8" y="2.7" width="1.2" height="2.2" fill="#222"/></svg>
<svg style="left:875px;top:557px;" width="11" height="11" viewBox="0 0 11 11"><path d="M1.5 9 A7.5 7.5 0 0 1 9 1.5 M3.5 9 A5.5 5.5 0 0 1 9 3.5 M5.5 9 A3.5 3.5 0 0 1 9 5.5" fill="none" stroke="#333" stroke-width="0.8"/><circle cx="8.7" cy="9" r="0.9" fill="#222"/></svg>
<svg style="left:889px;top:556px;" width="14" height="12" viewBox="0 0 14 12"><path d="M1 2.5 L12 1 V9.5 L1 10.5 Z" fill="none" stroke="#222" stroke-width="1"/><rect x="3" y="4" width="4.5" height="4" fill="none" stroke="#333" stroke-width="0.8"/><circle cx="9.5" cy="10" r="1.8" fill="#1565c0"/></svg>
<svg style="left:905px;top:557px;" width="13" height="11" viewBox="0 0 13 11"><path d="M1 3.8 H3 L6 1.3 V9.7 L3 7.2 H1 Z" fill="none" stroke="#222" stroke-width="0.9"/><path d="M8 3.5 Q9 5.5 8 7.5 M9.8 2 Q11.6 5.5 9.8 9" fill="none" stroke="#222" stroke-width="0.9"/></svg>
<div id="t33" class="t" style="left:924.90px;top:558.62px;font-size:8.6px;line-height:8.6px;color:#1e1e1e;transform:scaleX(0.7657);">ENG</div>
<div id="t34" class="t" style="left:952.40px;top:552.39px;font-size:8.4px;line-height:8.4px;color:#1e1e1e;transform:scaleX(0.8874);">8:16 PM</div>
<div id="t35" class="t" style="left:948.90px;top:564.79px;font-size:8.4px;line-height:8.4px;color:#1e1e1e;transform:scaleX(0.9519);">11/6/2021</div>
<svg style="left:995px;top:555px;" width="20" height="19" viewBox="0 0 20 19"><path d="M1.5 1.5 H15.5 V11 H6 L3 13.5 V11 H1.5 Z" fill="#1a1a1a"/><path d="M4 4 H13 M4 6.3 H13 M4 8.6 H10" stroke="#d9e0e7" stroke-width="0.8"/><circle cx="14" cy="14" r="4.2" fill="#e5e9ed" stroke="#333" stroke-width="0.9"/><text x="14" y="16.6" font-size="7" font-family="Liberation Sans" text-anchor="middle" fill="#111">3</text></svg>
<div class="a" style="left:1021px;top:20px;width:3px;height:515px;background:#111111"></div>
<div class="a" style="left:459px;top:21px;width:563px;height:519px;background:#ffffff;border:1px solid #2a2a2a;border-bottom:none"></div>
<div class="a" style="left:459px;top:539.5px;width:563px;height:1.5px;background:#0056a3"></div>
<svg style="left:464px;top:26px;" width="13" height="11" viewBox="0 0 13 11"><rect x="1.5" y="0.8" width="10.5" height="7" fill="#d5e9f7" stroke="#8b9095" stroke-width="0.7"/><path d="M2.5 6 L4.5 5 L6 2.5 L7.5 5.5 L9 3.8 L11.5 5.8" fill="none" stroke="#2e88d6" stroke-width="0.8"/><path d="M4 8.2 H9.5 L10.5 10 H3 Z" fill="#9a9fa4"/><rect x="0" y="4" width="2" height="2.2" fill="#4fae3f"/></svg>
<div id="t36" class="t" style="left:479.00px;top:27.97px;font-size:8.9px;line-height:8.9px;color:#000000;transform:scaleX(0.8461);">Task Manager</div>
<svg style="left:939px;top:30px;" width="8" height="2" viewBox="0 0 8 2"><rect x="0.5" y="0.3" width="6.6" height="1" fill="#222"/></svg>
<svg style="left:969px;top:27px;" width="9" height="9" viewBox="0 0 9 9"><rect x="1.2" y="1.2" width="6.5" height="6.5" fill="none" stroke="#222" stroke-width="0.9"/></svg>
<svg style="left:1001px;top:27px;" width="9" height="9" viewBox="0 0 9 9"><path d="M1 1 L8 8 M8 1 L1 8" stroke="#222" stroke-width="0.9"/></svg>
<div id="t37" class="t" style="left:464.50px;top:43.82px;font-size:8.6px;line-height:8.6px;color:#000000;transform:scaleX(0.8175);">File</div>
<div id="t38" class="t" style="left:483.90px;top:43.82px;font-size:8.6px;line-height:8.6px;color:#000000;transform:scaleX(0.9345);">Options</div>
<div id="t39" class="t" style="left:519.00px;top:43.82px;font-size:8.6px;line-height:8.6px;color:#000000;transform:scaleX(0.8824);">View</div>
<div class="a" style="left:465px;top:52.2px;width:4px;height:0.8px;background:#333"></div>
<div class="a" style="left:484px;top:52.2px;width:6px;height:0.8px;background:#333"></div>
<div class="a" style="left:519px;top:52.2px;width:5px;height:0.8px;background:#333"></div>
<div class="a" style="left:460px;top:53px;width:561px;height:1px;background:#e6e6e6"></div>
<div class="a" style="left:460px;top:71px;width:561px;height:1px;background:#d9d9d9"></div>
<div class="a" style="left:462px;top:57.5px;width:39.5px;height:14px;background:#f0f0f0;border:1px solid #d9d9d9"></div>
<div class="a" style="left:552.3px;top:57.5px;width:47.0px;height:14px;background:#f0f0f0;border:1px solid #d9d9d9"></div>
<div class="a" style="left:598.3px;top:57.5px;width:33.2px;height:14px;background:#f0f0f0;border:1px solid #d9d9d9"></div>
<div class="a" style="left:630.5px;top:57.5px;width:25.9px;height:14px;background:#f0f0f0;border:1px solid #d9d9d9"></div>
<div class="a" style="left:655.4px;top:57.5px;width:32.3px;height:14px;background:#f0f0f0;border:1px solid #d9d9d9"></div>
<div class="a" style="left:686.7px;top:57.5px;width:34.8px;height:14px;background:#f0f0f0;border:1px solid #d9d9d9"></div>
<div class="a" style="left:500.5px;top:56.5px;width:52.8px;height:16px;background:#ffffff;border:1px solid #d9d9d9;border-bottom:none"></div>
<div id="t40" class="t" style="left:464.70px;top:60.92px;font-size:8.6px;line-height:8.6px;color:#1a1a1a;transform:scaleX(0.8362);">Processes</div>
<div id="t41" class="t" style="left:504.70px;top:59.92px;font-size:8.6px;line-height:8.6px;color:#1a1a1a;transform:scaleX(0.8843);">Performance</div>
<div id="t42" class="t" style="left:555.00px;top:61.12px;font-size:8.6px;line-height:8.6px;color:#1a1a1a;transform:scaleX(0.9384);">App history</div>
<div id="t43" class="t" style="left:602.00px;top:61.12px;font-size:8.6px;line-height:8.6px;color:#1a1a1a;transform:scaleX(0.8952);">Startup</div>
<div id="t44" class="t" style="left:634.00px;top:61.12px;font-size:8.6px;line-height:8.6px;color:#1a1a1a;transform:scaleX(0.8580);">Users</div>
<div id="t45" class="t" style="left:659.00px;top:61.12px;font-size:8.6px;line-height:8.6px;color:#1a1a1a;transform:scaleX(0.9626);">Details</div>
<div id="t46" class="t" style="left:690.00px;top:61.12px;font-size:8.6px;line-height:8.6px;color:#1a1a1a;transform:scaleX(0.8574);">Services</div>
<div class="a" style="left:600px;top:86px;width:1px;height:419px;background:#e3e3e3"></div>
<div class="a" style="left:462.6px;top:299px;width:138px;height:46.3px;background:#cce8ff"></div>
<svg style="left:470px;top:86px;" width="40" height="27" viewBox="0 0 40 27"><rect x="0.5" y="0.5" width="39.0" height="26.0" fill="#ffffff" stroke="#117dbb" stroke-width="1"/><polyline points="1.0,21.3 1.9,20.9 2.9,20.1 3.9,22.0 4.8,21.2 5.8,19.0 6.7,19.5 7.7,20.1 8.6,20.1 9.6,20.4 10.5,20.0 11.4,19.7 12.4,21.1 13.3,19.4 14.3,19.8 15.2,19.9 16.2,20.8 17.1,20.7 18.1,19.4 19.1,21.6 20.0,19.1 20.9,20.1 21.9,20.5 22.9,20.9 23.8,20.2 24.8,20.0 25.7,19.4 26.6,20.0 27.6,19.4 28.6,19.3 29.5,19.9 30.4,19.5 31.4,21.1 32.4,13.5 33.3,16.9 34.2,19.9 35.2,16.5 36.1,19.1 37.1,19.9 38.0,17.9 39.0,13.5" fill="none" stroke="#117dbb" stroke-width="0.8"/><polygon points="1,26 1.0,21.3 1.9,20.9 2.9,20.1 3.9,22.0 4.8,21.2 5.8,19.0 6.7,19.5 7.7,20.1 8.6,20.1 9.6,20.4 10.5,20.0 11.4,19.7 12.4,21.1 13.3,19.4 14.3,19.8 15.2,19.9 16.2,20.8 17.1,20.7 18.1,19.4 19.1,21.6 20.0,19.1 20.9,20.1 21.9,20.5 22.9,20.9 23.8,20.2 24.8,20.0 25.7,19.4 26.6,20.0 27.6,19.4 28.6,19.3 29.5,19.9 30.4,19.5 31.4,21.1 32.4,13.5 33.3,16.9 34.2,19.9 35.2,16.5 36.1,19.1 37.1,19.9 38.0,17.9 39.0,13.5 39,26" fill="#117dbb" opacity="0.15"/></svg>
<svg style="left:470px;top:126px;" width="40" height="27" viewBox="0 0 40 27"><rect x="0.5" y="0.5" width="39.0" height="26.0" fill="#ffffff" stroke="#8b12ae" stroke-width="1"/><rect x="1" y="5.5" width="38" height="20.5" fill="#ececec"/><path d="M1 5.5 H39" stroke="#8b12ae" stroke-width="0.9"/></svg>
<svg style="left:470px;top:166.5px;" width="40" height="33.5" viewBox="0 0 40 33.5"><rect x="0.5" y="0.5" width="39.0" height="32.5" fill="#ffffff" stroke="#4da60c" stroke-width="1"/><path d="M1 32 L8 31.5 L12 30 L14 32 L30 32 L34 30.5 L37 29 L39 32" fill="none" stroke="#4da60c" stroke-width="0.8"/></svg>
<svg style="left:470px;top:212.5px;" width="40" height="33.099999999999994" viewBox="0 0 40 33.099999999999994"><rect x="0.5" y="0.5" width="39.0" height="32.1" fill="#ffffff" stroke="#a74f01" stroke-width="1"/><path d="M1 32 L4 29 L5 32 L7 28.5 L8 32 L11 29 L12 32 L22 32 L27 30 L29 22 L30 32 L32 2 L33 32 L35 1 L36 32 L38 1 L39 32" fill="none" stroke="#a74f01" stroke-width="0.8"/></svg>
<svg style="left:470px;top:259px;" width="40" height="33.39999999999998" viewBox="0 0 40 33.39999999999998"><rect x="0.5" y="0.5" width="39.0" height="32.4" fill="#ffffff" stroke="#117dbb" stroke-width="1"/><path d="M1 31 L10 31.5 L20 30.8 L28 31 L30 9 L31 31 L33 17 L34 31 L36 16 L37 31 L39 30" fill="none" stroke="#117dbb" stroke-width="0.8"/></svg>
<svg style="left:470px;top:305.5px;" width="40" height="33.30000000000001" viewBox="0 0 40 33.30000000000001"><rect x="0.5" y="0.5" width="39.0" height="32.3" fill="#ffffff" stroke="#117dbb" stroke-width="1"/><path d="M1 32 H39" stroke="#117dbb" stroke-width="0.9"/></svg>
<div id="t47" class="t" style="left:516.80px;top:86.61px;font-size:10.5px;line-height:10.5px;color:#000;transform:scaleX(0.8895);">CPU</div>
<div id="t48" class="t" style="left:516.80px;top:99.69px;font-size:8.4px;line-height:8.4px;color:#1a1a1a;transform:scaleX(0.8833);">17%  2.55 GHz</div>
<div id="t49" class="t" style="left:517.00px;top:126.11px;font-size:10.5px;line-height:10.5px;color:#000;transform:scaleX(1.0086);">Memory</div>
<div id="t50" class="t" style="left:517.00px;top:139.19px;font-size:8.4px;line-height:8.4px;color:#1a1a1a;transform:scaleX(0.8985);">12.7/15.8 GB (80%)</div>
<div id="t51" class="t" style="left:517.00px;top:166.71px;font-size:10.5px;line-height:10.5px;color:#000;transform:scaleX(0.9229);">Disk 0 (C:)</div>
<div id="t52" class="t" style="left:517.00px;top:179.49px;font-size:8.4px;line-height:8.4px;color:#1a1a1a;transform:scaleX(0.8677);">SSD</div>
<div id="t53" class="t" style="left:517.00px;top:190.09px;font-size:8.4px;line-height:8.4px;color:#1a1a1a;transform:scaleX(0.8690);">0%</div>
<div id="t54" class="t" style="left:517.00px;top:212.81px;font-size:10.5px;line-height:10.5px;color:#000;transform:scaleX(1.0040);">Wi-Fi</div>
<div id="t55" class="t" style="left:517.00px;top:225.59px;font-size:8.4px;line-height:8.4px;color:#1a1a1a;transform:scaleX(0.9558);">Wi-Fi</div>
<div id="t56" class="t" style="left:517.00px;top:236.49px;font-size:8.4px;line-height:8.4px;color:#1a1a1a;transform:scaleX(0.9013);"><span style="color:#8a8a8a">S:</span> 0 <span style="color:#8a8a8a">R:</span> 0 Kbps</div>
<div id="t57" class="t" style="left:517.00px;top:258.91px;font-size:10.5px;line-height:10.5px;color:#000;transform:scaleX(0.8999);">GPU 0</div>
<div id="t58" class="t" style="left:517.00px;top:272.29px;font-size:8.4px;line-height:8.4px;color:#1a1a1a;transform:scaleX(0.9261);">Intel(R) UHD Graphics</div>
<div id="t59" class="t" style="left:517.00px;top:282.79px;font-size:8.4px;line-height:8.4px;color:#1a1a1a;transform:scaleX(0.8547);">36%</div>
<div id="t60" class="t" style="left:517.00px;top:305.41px;font-size:10.5px;line-height:10.5px;color:#000;transform:scaleX(0.8999);">GPU 1</div>
<div id="t61" class="t" style="left:517.00px;top:318.79px;font-size:8.4px;line-height:8.4px;color:#1a1a1a;transform:scaleX(0.8811);">NVIDIA GeForce RTX...</div>
<div id="t62" class="t" style="left:517.00px;top:329.49px;font-size:8.4px;line-height:8.4px;color:#1a1a1a;transform:scaleX(0.8695);">4%  (45 °C)</div>
<div id="t63" class="t" style="left:617.60px;top:86.86px;font-size:18px;line-height:18px;color:#000;transform:scaleX(0.9183);">GPU</div>
<div id="t64" class="t" style="left:884.20px;top:93.12px;font-size:11.2px;line-height:11.2px;color:#000;transform:scaleX(0.8819);">NVIDIA GeForce RTX 2060</div>
<svg style="left:621px;top:116.5px;" width="6" height="4" viewBox="0 0 6 4"><path d="M0.5 0.6 L2.6 2.8 L4.7 0.6" fill="none" stroke="#666" stroke-width="0.7"/></svg>
<div id="t65" class="t" style="left:628.10px;top:114.18px;font-size:9px;line-height:9px;color:#1a1a1a;transform:scaleX(0.9163);">3D</div>
<div id="t66" class="t" style="left:800.45px;top:115.24px;font-size:7.4px;line-height:7.4px;color:#6d6d6d;transform:scaleX(0.8371);">0%</div>
<svg style="left:621.9px;top:128.2px;" width="186.80000000000007" height="55.30000000000001" viewBox="0 0 186.80000000000007 55.30000000000001"><rect x="22.6" y="0" width="1" height="55.3" fill="#deebf5"/><rect x="54.0" y="0" width="1" height="55.3" fill="#deebf5"/><rect x="85.4" y="0" width="1" height="55.3" fill="#deebf5"/><rect x="116.8" y="0" width="1" height="55.3" fill="#deebf5"/><rect x="148.2" y="0" width="1" height="55.3" fill="#deebf5"/><rect x="179.6" y="0" width="1" height="55.3" fill="#deebf5"/><rect x="0" y="5.0" width="186.8" height="1" fill="#deebf5"/><rect x="0" y="10.6" width="186.8" height="1" fill="#deebf5"/><rect x="0" y="16.1" width="186.8" height="1" fill="#deebf5"/><rect x="0" y="21.6" width="186.8" height="1" fill="#deebf5"/><rect x="0" y="27.2" width="186.8" height="1" fill="#deebf5"/><rect x="0" y="32.7" width="186.8" height="1" fill="#deebf5"/><rect x="0" y="38.2" width="186.8" height="1" fill="#deebf5"/><rect x="0" y="43.7" width="186.8" height="1" fill="#deebf5"/><rect x="0" y="49.3" width="186.8" height="1" fill="#deebf5"/><rect x="0.5" y="0.5" width="185.8" height="54.3" fill="none" stroke="#3f93d4" stroke-width="1.1"/></svg>
<svg style="left:815px;top:116.5px;" width="6" height="4" viewBox="0 0 6 4"><path d="M0.5 0.6 L2.6 2.8 L4.7 0.6" fill="none" stroke="#666" stroke-width="0.7"/></svg>
<div id="t67" class="t" style="left:821.40px;top:114.18px;font-size:9px;line-height:9px;color:#1a1a1a;transform:scaleX(0.9670);">Cuda</div>
<div id="t68" class="t" style="left:990.30px;top:115.24px;font-size:7.4px;line-height:7.4px;color:#6d6d6d;transform:scaleX(0.8672);">96%</div>
<svg style="left:814.9px;top:128.2px;" width="187.5" height="55.30000000000001" viewBox="0 0 187.5 55.30000000000001"><polygon points="0,55.3 0.0,2.0 3.5,10.1 7.4,1.6 11.4,4.6 14.8,1.6 18.8,8.9 23.0,2.9 27.2,5.5 30.6,2.8 34.3,9.2 38.8,1.8 43.0,6.1 47.1,1.6 50.5,5.0 54.4,2.0 58.6,5.6 63.1,2.5 66.8,5.9 71.4,2.6 75.1,9.7 79.6,1.7 83.6,4.6 88.0,2.4 92.6,5.3 96.8,2.4 100.8,6.6 104.8,2.5 108.2,6.3 113.0,2.7 116.7,5.5 120.1,2.2 123.6,11.1 127.1,1.9 131.0,9.8 135.1,2.8 139.7,6.7 143.6,2.0 148.2,8.7 151.9,1.9 155.9,6.0 159.2,2.1 163.0,5.9 167.4,2.3 171.6,11.6 176.1,2.8 180.6,5.5 184.0,2.5 187.4,8.6 187.5,55.3" fill="#f0f5fa"/><rect x="19.4" y="0" width="1" height="55.3" fill="#deebf5"/><rect x="51.0" y="0" width="1" height="55.3" fill="#deebf5"/><rect x="82.6" y="0" width="1" height="55.3" fill="#deebf5"/><rect x="114.2" y="0" width="1" height="55.3" fill="#deebf5"/><rect x="145.8" y="0" width="1" height="55.3" fill="#deebf5"/><rect x="177.4" y="0" width="1" height="55.3" fill="#deebf5"/><rect x="0" y="5.0" width="187.5" height="1" fill="#deebf5"/><rect x="0" y="10.6" width="187.5" height="1" fill="#deebf5"/><rect x="0" y="16.1" width="187.5" height="1" fill="#deebf5"/><rect x="0" y="21.6" width="187.5" height="1" fill="#deebf5"/><rect x="0" y="27.2" width="187.5" height="1" fill="#deebf5"/><rect x="0" y="32.7" width="187.5" height="1" fill="#deebf5"/><rect x="0" y="38.2" width="187.5" height="1" fill="#deebf5"/><rect x="0" y="43.7" width="187.5" height="1" fill="#deebf5"/><rect x="0" y="49.3" width="187.5" height="1" fill="#deebf5"/><polyline points="0.0,2.0 3.5,10.1 7.4,1.6 11.4,4.6 14.8,1.6 18.8,8.9 23.0,2.9 27.2,5.5 30.6,2.8 34.3,9.2 38.8,1.8 43.0,6.1 47.1,1.6 50.5,5.0 54.4,2.0 58.6,5.6 63.1,2.5 66.8,5.9 71.4,2.6 75.1,9.7 79.6,1.7 83.6,4.6 88.0,2.4 92.6,5.3 96.8,2.4 100.8,6.6 104.8,2.5 108.2,6.3 113.0,2.7 116.7,5.5 120.1,2.2 123.6,11.1 127.1,1.9 131.0,9.8 135.1,2.8 139.7,6.7 143.6,2.0 148.2,8.7 151.9,1.9 155.9,6.0 159.2,2.1 163.0,5.9 167.4,2.3 171.6,11.6 176.1,2.8 180.6,5.5 184.0,2.5 187.4,8.6" fill="none" stroke="#3f93d4" stroke-width="0.9"/><rect x="0.5" y="0.5" width="186.5" height="54.3" fill="none" stroke="#3f93d4" stroke-width="1.1"/></svg>
<svg style="left:621px;top:193.3px;" width="6" height="4" viewBox="0 0 6 4"><path d="M0.5 0.6 L2.6 2.8 L4.7 0.6" fill="none" stroke="#666" stroke-width="0.7"/></svg>
<div id="t69" class="t" style="left:628.25px;top:190.88px;font-size:9px;line-height:9px;color:#1a1a1a;transform:scaleX(0.9978);">Video Encode</div>
<div id="t70" class="t" style="left:800.45px;top:191.94px;font-size:7.4px;line-height:7.4px;color:#6d6d6d;transform:scaleX(0.8371);">0%</div>
<svg style="left:621.9px;top:204.75px;" width="186.80000000000007" height="55.75" viewBox="0 0 186.80000000000007 55.75"><rect x="22.6" y="0" width="1" height="55.8" fill="#deebf5"/><rect x="54.0" y="0" width="1" height="55.8" fill="#deebf5"/><rect x="85.4" y="0" width="1" height="55.8" fill="#deebf5"/><rect x="116.8" y="0" width="1" height="55.8" fill="#deebf5"/><rect x="148.2" y="0" width="1" height="55.8" fill="#deebf5"/><rect x="179.6" y="0" width="1" height="55.8" fill="#deebf5"/><rect x="0" y="5.1" width="186.8" height="1" fill="#deebf5"/><rect x="0" y="10.7" width="186.8" height="1" fill="#deebf5"/><rect x="0" y="16.2" width="186.8" height="1" fill="#deebf5"/><rect x="0" y="21.8" width="186.8" height="1" fill="#deebf5"/><rect x="0" y="27.4" width="186.8" height="1" fill="#deebf5"/><rect x="0" y="33.0" width="186.8" height="1" fill="#deebf5"/><rect x="0" y="38.5" width="186.8" height="1" fill="#deebf5"/><rect x="0" y="44.1" width="186.8" height="1" fill="#deebf5"/><rect x="0" y="49.7" width="186.8" height="1" fill="#deebf5"/><rect x="0.5" y="0.5" width="185.8" height="54.8" fill="none" stroke="#3f93d4" stroke-width="1.1"/></svg>
<svg style="left:815px;top:193.3px;" width="6" height="4" viewBox="0 0 6 4"><path d="M0.5 0.6 L2.6 2.8 L4.7 0.6" fill="none" stroke="#666" stroke-width="0.7"/></svg>
<div id="t71" class="t" style="left:821.25px;top:190.88px;font-size:9px;line-height:9px;color:#1a1a1a;transform:scaleX(1.0067);">Video Decode</div>
<div id="t72" class="t" style="left:994.20px;top:191.94px;font-size:7.4px;line-height:7.4px;color:#6d6d6d;transform:scaleX(0.8371);">0%</div>
<svg style="left:814.9px;top:204.75px;" width="187.5" height="55.75" viewBox="0 0 187.5 55.75"><rect x="20.0" y="0" width="1" height="55.8" fill="#deebf5"/><rect x="51.6" y="0" width="1" height="55.8" fill="#deebf5"/><rect x="83.2" y="0" width="1" height="55.8" fill="#deebf5"/><rect x="114.8" y="0" width="1" height="55.8" fill="#deebf5"/><rect x="146.4" y="0" width="1" height="55.8" fill="#deebf5"/><rect x="178.0" y="0" width="1" height="55.8" fill="#deebf5"/><rect x="0" y="5.1" width="187.5" height="1" fill="#deebf5"/><rect x="0" y="10.7" width="187.5" height="1" fill="#deebf5"/><rect x="0" y="16.2" width="187.5" height="1" fill="#deebf5"/><rect x="0" y="21.8" width="187.5" height="1" fill="#deebf5"/><rect x="0" y="27.4" width="187.5" height="1" fill="#deebf5"/><rect x="0" y="33.0" width="187.5" height="1" fill="#deebf5"/><rect x="0" y="38.5" width="187.5" height="1" fill="#deebf5"/><rect x="0" y="44.1" width="187.5" height="1" fill="#deebf5"/><rect x="0" y="49.7" width="187.5" height="1" fill="#deebf5"/><rect x="0.5" y="0.5" width="186.5" height="54.8" fill="none" stroke="#3f93d4" stroke-width="1.1"/></svg>
<div id="t73" class="t" style="left:620.60px;top:269.75px;font-size:7.5px;line-height:7.5px;color:#6d6d6d;transform:scaleX(0.9148);">Dedicated GPU memory usage</div>
<div id="t74" class="t" style="left:983.50px;top:269.75px;font-size:7.5px;line-height:7.5px;color:#6d6d6d;transform:scaleX(0.8568);">6.0 GB</div>
<svg style="left:620.6px;top:280.3px;" width="382.9" height="43.80000000000001" viewBox="0 0 382.9 43.80000000000001"><rect x="0" y="10.3" width="382.9" height="33.5" fill="#f0f5fa"/><rect x="12.8" y="0" width="1" height="43.8" fill="#deebf5"/><rect x="38.8" y="0" width="1" height="43.8" fill="#deebf5"/><rect x="64.7" y="0" width="1" height="43.8" fill="#deebf5"/><rect x="90.7" y="0" width="1" height="43.8" fill="#deebf5"/><rect x="116.6" y="0" width="1" height="43.8" fill="#deebf5"/><rect x="142.6" y="0" width="1" height="43.8" fill="#deebf5"/><rect x="168.5" y="0" width="1" height="43.8" fill="#deebf5"/><rect x="194.4" y="0" width="1" height="43.8" fill="#deebf5"/><rect x="220.4" y="0" width="1" height="43.8" fill="#deebf5"/><rect x="246.3" y="0" width="1" height="43.8" fill="#deebf5"/><rect x="272.3" y="0" width="1" height="43.8" fill="#deebf5"/><rect x="298.2" y="0" width="1" height="43.8" fill="#deebf5"/><rect x="324.2" y="0" width="1" height="43.8" fill="#deebf5"/><rect x="350.1" y="0" width="1" height="43.8" fill="#deebf5"/><rect x="376.1" y="0" width="1" height="43.8" fill="#deebf5"/><rect x="0" y="3.9" width="382.9" height="1" fill="#deebf5"/><rect x="0" y="8.3" width="382.9" height="1" fill="#deebf5"/><rect x="0" y="12.6" width="382.9" height="1" fill="#deebf5"/><rect x="0" y="17.0" width="382.9" height="1" fill="#deebf5"/><rect x="0" y="21.4" width="382.9" height="1" fill="#deebf5"/><rect x="0" y="25.8" width="382.9" height="1" fill="#deebf5"/><rect x="0" y="30.2" width="382.9" height="1" fill="#deebf5"/><rect x="0" y="34.5" width="382.9" height="1" fill="#deebf5"/><rect x="0" y="38.9" width="382.9" height="1" fill="#deebf5"/><path d="M0 10.3 H383" stroke="#3f93d4" stroke-width="1"/><rect x="0.5" y="0.5" width="381.9" height="42.8" fill="none" stroke="#3f93d4" stroke-width="1.1"/></svg>
<div id="t75" class="t" style="left:620.60px;top:329.15px;font-size:7.5px;line-height:7.5px;color:#6d6d6d;transform:scaleX(0.9060);">Shared GPU memory usage</div>
<div id="t76" class="t" style="left:984.00px;top:329.15px;font-size:7.5px;line-height:7.5px;color:#6d6d6d;transform:scaleX(0.8354);">7.9 GB</div>
<svg style="left:620.6px;top:339.8px;" width="382.9" height="43.69999999999999" viewBox="0 0 382.9 43.69999999999999"><rect x="12.8" y="0" width="1" height="43.7" fill="#deebf5"/><rect x="38.8" y="0" width="1" height="43.7" fill="#deebf5"/><rect x="64.7" y="0" width="1" height="43.7" fill="#deebf5"/><rect x="90.7" y="0" width="1" height="43.7" fill="#deebf5"/><rect x="116.6" y="0" width="1" height="43.7" fill="#deebf5"/><rect x="142.6" y="0" width="1" height="43.7" fill="#deebf5"/><rect x="168.5" y="0" width="1" height="43.7" fill="#deebf5"/><rect x="194.4" y="0" width="1" height="43.7" fill="#deebf5"/><rect x="220.4" y="0" width="1" height="43.7" fill="#deebf5"/><rect x="246.3" y="0" width="1" height="43.7" fill="#deebf5"/><rect x="272.3" y="0" width="1" height="43.7" fill="#deebf5"/><rect x="298.2" y="0" width="1" height="43.7" fill="#deebf5"/><rect x="324.2" y="0" width="1" height="43.7" fill="#deebf5"/><rect x="350.1" y="0" width="1" height="43.7" fill="#deebf5"/><rect x="376.1" y="0" width="1" height="43.7" fill="#deebf5"/><rect x="0" y="3.9" width="382.9" height="1" fill="#deebf5"/><rect x="0" y="8.2" width="382.9" height="1" fill="#deebf5"/><rect x="0" y="12.6" width="382.9" height="1" fill="#deebf5"/><rect x="0" y="17.0" width="382.9" height="1" fill="#deebf5"/><rect x="0" y="21.3" width="382.9" height="1" fill="#deebf5"/><rect x="0" y="25.7" width="382.9" height="1" fill="#deebf5"/><rect x="0" y="30.1" width="382.9" height="1" fill="#deebf5"/><rect x="0" y="34.5" width="382.9" height="1" fill="#deebf5"/><rect x="0" y="38.8" width="382.9" height="1" fill="#deebf5"/><rect x="0.5" y="0.5" width="381.9" height="42.7" fill="none" stroke="#3f93d4" stroke-width="1.1"/></svg>
<div id="t77" class="t" style="left:619.00px;top:397.29px;font-size:8.4px;line-height:8.4px;color:#6d6d6d;transform:scaleX(0.9796);">Utilization</div>
<div id="t78" class="t" style="left:619.00px;top:409.87px;font-size:13.5px;line-height:13.5px;color:#000;transform:scaleX(0.8714);">4%</div>
<div id="t79" class="t" style="left:697.80px;top:397.29px;font-size:8.4px;line-height:8.4px;color:#6d6d6d;transform:scaleX(0.9261);">Dedicated GPU memory</div>
<div id="t80" class="t" style="left:697.80px;top:409.87px;font-size:13.5px;line-height:13.5px;color:#000;transform:scaleX(0.9018);">4.6/6.0 GB</div>
<div id="t81" class="t" style="left:619.00px;top:432.19px;font-size:8.4px;line-height:8.4px;color:#6d6d6d;transform:scaleX(0.8907);">GPU Memory</div>
<div id="t82" class="t" style="left:619.00px;top:444.37px;font-size:13.5px;line-height:13.5px;color:#000;transform:scaleX(0.8995);">4.7/13.9 GB</div>
<div id="t83" class="t" style="left:697.80px;top:432.19px;font-size:8.4px;line-height:8.4px;color:#6d6d6d;transform:scaleX(0.9003);">Shared GPU memory</div>
<div id="t84" class="t" style="left:697.80px;top:444.37px;font-size:13.5px;line-height:13.5px;color:#000;transform:scaleX(0.9018);">0.1/7.9 GB</div>
<div id="t85" class="t" style="left:697.80px;top:466.69px;font-size:8.4px;line-height:8.4px;color:#6d6d6d;transform:scaleX(0.9126);">GPU Temperature</div>
<div id="t86" class="t" style="left:697.80px;top:478.97px;font-size:13.5px;line-height:13.5px;color:#000;transform:scaleX(0.8752);">45 °C</div>
<div id="t87" class="t" style="left:791.30px;top:396.79px;font-size:8.4px;line-height:8.4px;color:#6d6d6d;transform:scaleX(0.9300);">Driver version:</div>
<div id="t88" class="t" style="left:900.00px;top:396.79px;font-size:8.4px;line-height:8.4px;color:#1a1a1a;transform:scaleX(0.8664);">27.21.14.6089</div>
<div id="t89" class="t" style="left:791.30px;top:409.39px;font-size:8.4px;line-height:8.4px;color:#6d6d6d;transform:scaleX(0.9474);">Driver date:</div>
<div id="t90" class="t" style="left:900.00px;top:409.39px;font-size:8.4px;line-height:8.4px;color:#1a1a1a;transform:scaleX(0.9607);">12/11/2020</div>
<div id="t91" class="t" style="left:791.30px;top:422.19px;font-size:8.4px;line-height:8.4px;color:#6d6d6d;transform:scaleX(0.9323);">DirectX version:</div>
<div id="t92" class="t" style="left:900.00px;top:422.19px;font-size:8.4px;line-height:8.4px;color:#1a1a1a;transform:scaleX(0.8618);">12 (FL 12.1)</div>
<div id="t93" class="t" style="left:791.30px;top:435.19px;font-size:8.4px;line-height:8.4px;color:#6d6d6d;transform:scaleX(0.9320);">Physical location:</div>
<div id="t94" class="t" style="left:900.00px;top:435.19px;font-size:8.4px;line-height:8.4px;color:#1a1a1a;transform:scaleX(0.9128);">PCI bus 1, device 0, function 0</div>
<div id="t95" class="t" style="left:791.30px;top:447.99px;font-size:8.4px;line-height:8.4px;color:#6d6d6d;transform:scaleX(0.9387);">Hardware reserved memory:</div>
<div id="t96" class="t" style="left:900.00px;top:447.99px;font-size:8.4px;line-height:8.4px;color:#1a1a1a;transform:scaleX(0.8881);">164 MB</div>
<svg style="left:464px;top:516px;" width="16" height="16" viewBox="0 0 16 16"><circle cx="7.7" cy="7.9" r="6" fill="none" stroke="#8a8a8a" stroke-width="0.8"/><path d="M5 9 L7.7 6.3 L10.4 9" fill="none" stroke="#555" stroke-width="0.8"/></svg>
<div id="t97" class="t" style="left:482.60px;top:519.62px;font-size:8.6px;line-height:8.6px;color:#1a1a1a;transform:scaleX(0.9132);">Fewer details</div>
<div class="a" style="left:507.3px;top:528px;width:4.5px;height:0.8px;background:#333"></div>
<div class="a" style="left:534.6px;top:519px;width:1px;height:10px;background:#d0d0d0"></div>
<svg style="left:539px;top:517px;" width="13" height="13" viewBox="0 0 13 13"><circle cx="6.3" cy="6.5" r="5.4" fill="#f0f0f0" stroke="#555" stroke-width="0.9"/><circle cx="6.3" cy="6.5" r="4" fill="none" stroke="#aaa" stroke-width="0.6"/><path d="M4 3.8 L7.6 8" stroke="#d32020" stroke-width="1.2"/></svg>
<div id="t98" class="t" style="left:554.20px;top:519.62px;font-size:8.6px;line-height:8.6px;color:#1f6fc5;transform:scaleX(0.9139);">Open Resource Monitor</div>
</body></html>
